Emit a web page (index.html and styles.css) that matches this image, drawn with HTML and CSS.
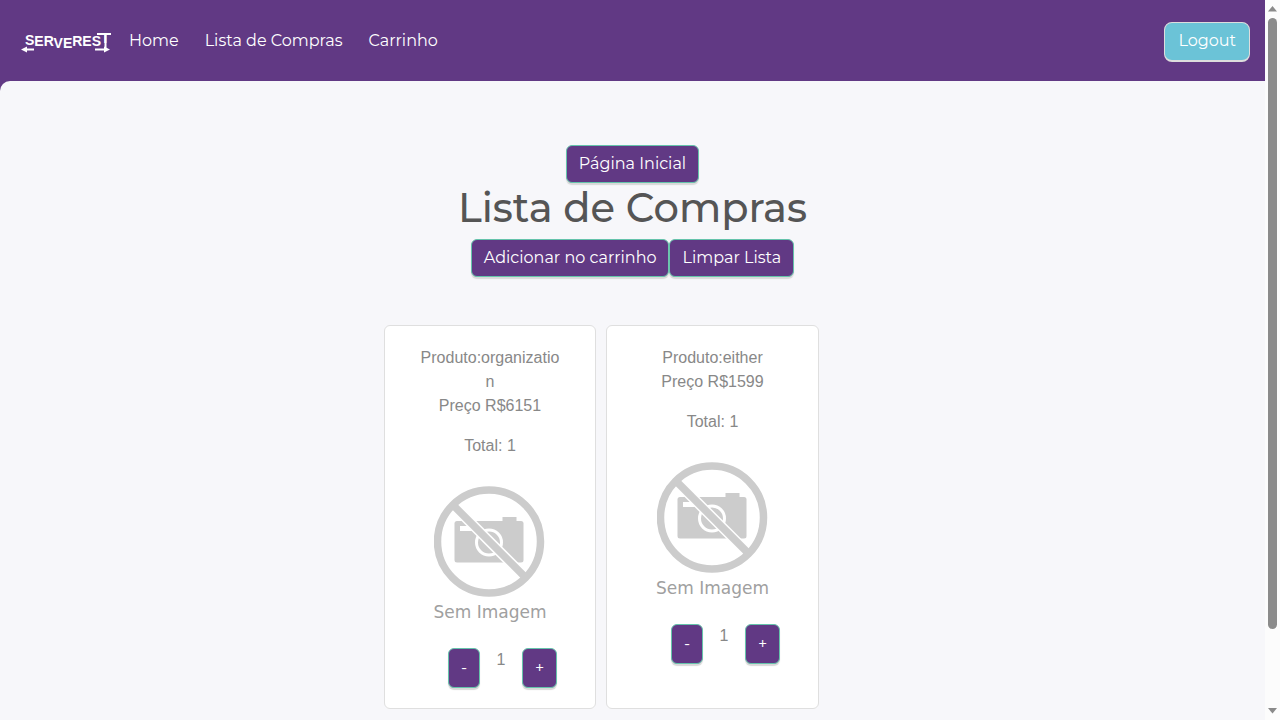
FILE: index.html
```html
<!DOCTYPE html>
<html lang="pt-BR">
<head>
<meta charset="utf-8">
<meta name="viewport" content="width=device-width, initial-scale=1">
<title>Lista de Compras</title>
<link rel="stylesheet" href="styles.css">
</head>
<body>
<svg class="defs" width="0" height="0" aria-hidden="true">
  <symbol id="no-photo" viewBox="0 0 112 112">
    <rect x="20.500" y="35" width="69" height="41.500" rx="2.500" fill="#ccc"/>
    <rect x="68.500" y="31" width="14" height="6" fill="#ccc"/>
    <rect x="26" y="40" width="15" height="5" fill="#fff"/>
    <circle cx="55" cy="56.500" r="12.500" fill="none" stroke="#fff" stroke-width="3"/>
    <path d="M18 18L93 93" stroke="#fff" stroke-width="10.500"/>
    <path d="M18 18L93 93" stroke="#ccc" stroke-width="7.500"/>
    <circle cx="55" cy="55.500" r="51.500" fill="none" stroke="#ccc" stroke-width="7.500"/>
  </symbol>
</svg>
<div class="window">
  <div class="page">
    <header class="navbar">
      <a class="brand" href="#" aria-label="ServeRest">
        <svg width="90" height="26" viewBox="0 0 90 26" aria-hidden="true">
          <text class="brand-text" x="4" y="16">S<tspan dy="1">ER</tspan><tspan dy="2">VE</tspan><tspan dy="-2">RES</tspan><tspan dy="-3">T</tspan></text>
          <path d="M76 5h14M84.500 5v16" stroke="#fff" stroke-width="2" fill="none"/>
          <path d="M4 20.500h9M74 20.500h11" stroke="#fff" stroke-width="2" fill="none"/>
          <path d="M0 20.500l6-3v6zM89 20.500l-6-3v6z" fill="#fff"/>
        </svg>
      </a>
      <nav class="links">
        <a href="#">Home</a>
        <a href="#">Lista de Compras</a>
        <a href="#">Carrinho</a>
      </nav>
      <button class="logout" type="button">Logout</button>
    </header>
    <main class="content">
      <button class="btn" type="button">Página Inicial</button>
      <h1 class="title">Lista de Compras</h1>
      <div class="actions">
        <button class="btn" type="button">Adicionar no carrinho</button>
        <button class="btn" type="button">Limpar Lista</button>
      </div>
      <section class="cards">
        <article class="card">
          <p class="product">Produto:organization</p>
          <p class="price">Preço R$6151</p>
          <p class="total">Total: 1</p>
          <figure class="photo">
            <svg width="112" height="112" aria-hidden="true"><use href="#no-photo"/></svg>
            <figcaption>Sem Imagem</figcaption>
          </figure>
          <div class="quantity">
            <button class="btn step" type="button">-</button>
            <span>1</span>
            <button class="btn step" type="button">+</button>
          </div>
        </article>
        <article class="card">
          <p class="product">Produto:either</p>
          <p class="price">Preço R$1599</p>
          <p class="total">Total: 1</p>
          <figure class="photo">
            <svg width="112" height="112" aria-hidden="true"><use href="#no-photo"/></svg>
            <figcaption>Sem Imagem</figcaption>
          </figure>
          <div class="quantity">
            <button class="btn step" type="button">-</button>
            <span>1</span>
            <button class="btn step" type="button">+</button>
          </div>
        </article>
      </section>
    </main>
  </div>
  <div class="scrollbar" aria-hidden="true">
    <svg width="9" height="6" viewBox="0 0 9 6"><path d="M0 5.500L4.500 0 9 5.500z" fill="#8a8a8a"/></svg>
    <div class="track"><div class="thumb"></div></div>
    <svg width="9" height="6" viewBox="0 0 9 6"><path d="M0 0h9L4.500 5.500z" fill="#8a8a8a"/></svg>
  </div>
</div>
</body>
</html>
```
FILE: styles.css
```css
* { box-sizing: border-box; }

body {
  margin: 0;
  background: #f7f7fa;
  color: #888;
  font: 16px/24px "Liberation Sans", Arial, sans-serif;
}

.defs { position: absolute; }

.window {
  display: flex;
  height: 100vh;
}

.page {
  flex: 1;
  overflow: hidden;
  background: #613984;
  display: flex;
  flex-direction: column;
}

.navbar {
  flex: none;
  display: flex;
  align-items: center;
  padding: 22px 15px 19px 21px;
  background: #613984;
  font-family: Montserrat, Inter, sans-serif;
}

.brand { display: flex; }

.brand-text {
  font: bold 14px "Liberation Sans", sans-serif;
  fill: #fff;
}

.links {
  display: flex;
  flex: 1;
  gap: 26px;
  margin-left: 18px;
  padding-bottom: 3px;
}

.links a {
  color: #fff;
  text-decoration: none;
}

.logout {
  height: 40px;
  padding: 0 13px 1px;
  border: 1px solid #ddd;
  border-bottom-width: 2px;
  border-radius: 8px;
  background: #6bc3d7;
  color: #fff;
  font: 16px/24px Montserrat, Inter, sans-serif;
}

.content {
  flex: 1 0 auto;
  display: flex;
  flex-direction: column;
  align-items: center;
  padding: 64px 24px 11px;
  border-top-left-radius: 10px;
  background: #f7f7fa;
}

.btn {
  height: 38px;
  padding: 0 12px;
  border: 1px solid #65c3ab;
  border-radius: 6px;
  background: #613984;
  box-shadow: 0 2px 1px #d8d8d8;
  color: #fff;
  font: 16px/24px Montserrat, Inter, sans-serif;
}

.title {
  margin: 0 0 6px;
  color: #555;
  font: 500 40px/50px Montserrat, Inter, sans-serif;
}

.actions { display: flex; }

.cards {
  display: grid;
  grid-template-columns: 212px 213px;
  gap: 10px;
  width: 100%;
  max-width: 497px;
  margin-top: 48px;
}

.card {
  padding: 20px 35px;
  border: 1px solid #dfdfdf;
  border-radius: 6px;
  background: #fff;
  text-align: center;
}

.product, .price { margin: 0; overflow-wrap: anywhere; }

.total { margin: 16px 0 28px; }

.photo {
  display: flex;
  flex-direction: column;
  align-items: center;
  margin: 0;
  color: #a0a0a0;
  font: 17px/24px "DejaVu Sans", sans-serif;
}

.photo figcaption { margin-top: 2px; white-space: nowrap; }

.quantity {
  display: grid;
  grid-template-columns: 32px 42px 35px;
  justify-content: end;
  margin: 24px 3px 0 0;
}

.step {
  height: 40px;
  padding: 0;
}

.scrollbar {
  display: flex;
  flex: none;
  flex-direction: column;
  align-items: center;
  width: 15px;
  padding: 6px 0;
  background: #fcfcfc;
}

.track {
  flex: 1;
  width: 9px;
  padding: 6px 0 4px;
}

.thumb {
  height: 89%;
  border-radius: 5px;
  background: #8b8b8b;
}
```
